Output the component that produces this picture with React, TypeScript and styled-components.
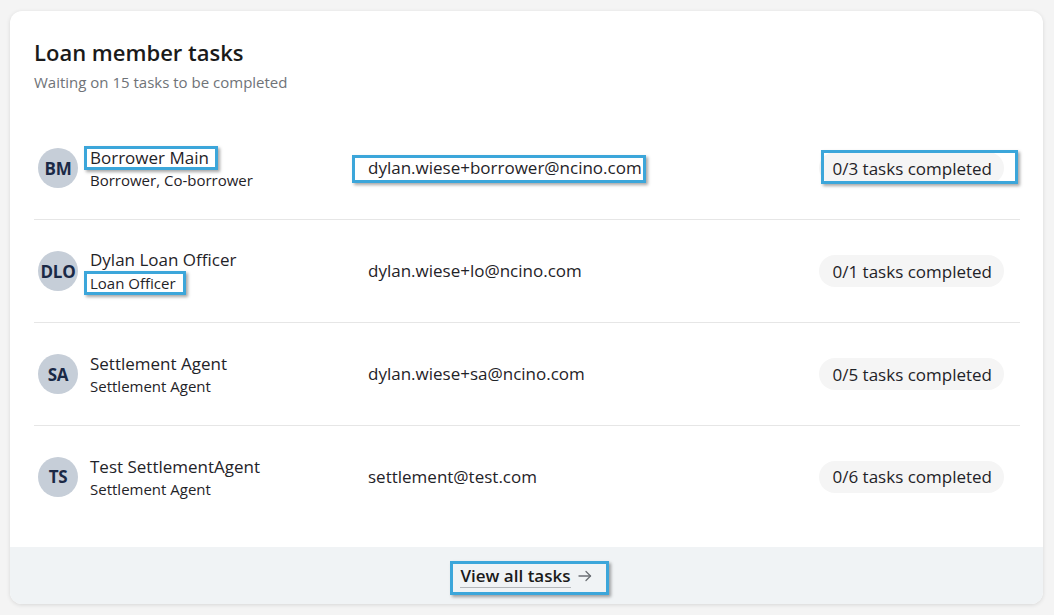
import React from 'react';
import styled, { createGlobalStyle } from 'styled-components';

const GlobalStyle = createGlobalStyle`
  html, body {
    margin: 0;
    padding: 0;
    background: #f4f4f4;
    font-family: "Open Sans", "Noto Sans", Arial, sans-serif;
    color: #1f2328;
  }
  * { box-sizing: border-box; }
`;

const Page = styled.div`
  width: 1054px;
  height: 615px;
  padding: 11px 11px 10px 10px;
`;

const Card = styled.section`
  background: #ffffff;
  border-radius: 12px;
  box-shadow: 0 1px 4px rgba(0, 0, 0, 0.12);
  display: flex;
  flex-direction: column;
`;

const Body = styled.div`
  padding: 26px 23px 20px 24px;
`;

const Title = styled.h2`
  margin: 0;
  font-size: 22px;
  line-height: 30px;
  font-weight: 600;
  color: #1a1a1a;
`;

const Subtitle = styled.p`
  margin: 5px 0 0;
  font-size: 15px;
  line-height: 20px;
  color: #6f7378;
`;

const List = styled.ul`
  list-style: none;
  margin: 25px 0 0;
  padding: 0;
`;

const Row = styled.li`
  display: grid;
  grid-template-columns: 330px 1fr auto;
  align-items: center;
  height: 103px;
  padding: 0 16px 0 4px;
  border-bottom: 1px solid #e6e6e6;

  &:last-child {
    border-bottom: none;
    height: 101px;
  }
`;

const Member = styled.div`
  display: flex;
  align-items: center;
  gap: 12px;
`;

const Avatar = styled.div`
  width: 40px;
  height: 40px;
  border-radius: 50%;
  background: #c6ced8;
  color: #1a2946;
  font-weight: 700;
  font-size: 17px;
  display: flex;
  align-items: center;
  justify-content: center;
  letter-spacing: -0.3px;
  flex-shrink: 0;
`;

const Names = styled.div`
  display: flex;
  flex-direction: column;
  align-items: flex-start;
`;

const Name = styled.span`
  font-size: 17px;
  line-height: 24px;
  color: #1f2328;
`;

const Role = styled.span`
  font-size: 15px;
  line-height: 20px;
  color: #1f2328;
`;

const Email = styled.span`
  font-size: 17px;
  line-height: 24px;
  color: #1f2328;
  justify-self: start;
`;

const Badge = styled.span`
  display: inline-flex;
  align-items: center;
  height: 32px;
  padding: 0 12px 0 13px;
  border-radius: 16px;
  background: #f5f5f5;
  font-size: 17px;
  color: #1f2328;
`;

const Footer = styled.div`
  background: #f0f3f5;
  border-radius: 0 0 12px 12px;
  height: 57px;
  display: flex;
  align-items: center;
  justify-content: center;
`;

const ViewAll = styled.a`
  display: inline-flex;
  align-items: center;
  gap: 6px;
  font-size: 17px;
  line-height: 24px;
  font-weight: 600;
  color: #1a1a1a;
  text-decoration: none;
  cursor: pointer;
  margin-top: 1px;
`;

const LinkText = styled.span`
  border-bottom: 1px solid #b3b7bb;
  line-height: 23px;
`;

type Inset = { t: number; r: number; b: number; l: number };

const Marked = styled.span<{ $inset: Inset }>`
  position: relative;
  display: inline-block;
  justify-self: start;
  align-self: center;

  &::after {
    content: '';
    position: absolute;
    top: ${(p) => p.$inset.t}px;
    right: ${(p) => p.$inset.r}px;
    bottom: ${(p) => p.$inset.b}px;
    left: ${(p) => p.$inset.l}px;
    border: 3px solid #3ca6da;
    box-shadow: 2px 2px 3px rgba(0, 0, 0, 0.35);
    pointer-events: none;
  }
`;

const NameMark = styled(Marked)`
  align-self: flex-start;
`;

const Arrow = () => (
  <svg width="16" height="16" viewBox="0 0 16 16" fill="none" stroke="#6b6f74" strokeWidth="1.3" strokeLinecap="round" strokeLinejoin="round">
    <path d="M2 8h11.5" />
    <path d="M9 3.5 13.5 8 9 12.5" />
  </svg>
);

type MemberData = {
  initials: string;
  name: string;
  role: string;
  email: string;
  done: number;
  total: number;
};

const members: MemberData[] = [
  { initials: 'BM', name: 'Borrower Main', role: 'Borrower, Co-borrower', email: 'dylan.wiese+borrower@ncino.com', done: 0, total: 3 },
  { initials: 'DLO', name: 'Dylan Loan Officer', role: 'Loan Officer', email: 'dylan.wiese+lo@ncino.com', done: 0, total: 1 },
  { initials: 'SA', name: 'Settlement Agent', role: 'Settlement Agent', email: 'dylan.wiese+sa@ncino.com', done: 0, total: 5 },
  { initials: 'TS', name: 'Test SettlementAgent', role: 'Settlement Agent', email: 'settlement@test.com', done: 0, total: 6 },
];

const App: React.FC = () => {
  return (
    <>
      <GlobalStyle />
      <Page>
        <Card>
          <Body>
            <Title>Loan member tasks</Title>
            <Subtitle>Waiting on 15 tasks to be completed</Subtitle>
            <List>
              {members.map((m, i) => {
                const nameEl = <Name>{m.name}</Name>;
                const roleEl = <Role>{m.role}</Role>;
                const email = <Email>{m.email}</Email>;
                const badge = <Badge>{m.done}/{m.total} tasks completed</Badge>;
                return (
                  <Row key={m.email}>
                    <Member>
                      <Avatar>{m.initials}</Avatar>
                      <Names>
                        {i === 0 ? (
                          <NameMark $inset={{ t: 0, r: -9, b: 0, l: -6 }}>{nameEl}</NameMark>
                        ) : (
                          nameEl
                        )}
                        {i === 1 ? (
                          <NameMark $inset={{ t: -1, r: -10, b: -1, l: -6 }}>{roleEl}</NameMark>
                        ) : (
                          roleEl
                        )}
                      </Names>
                    </Member>
                    {i === 0 ? (
                      <Marked $inset={{ t: -1, r: -4, b: -3, l: -16 }}>{email}</Marked>
                    ) : (
                      email
                    )}
                    {i === 0 ? (
                      <Marked $inset={{ t: -2, r: -14, b: 0, l: 2 }}>{badge}</Marked>
                    ) : (
                      badge
                    )}
                  </Row>
                );
              })}
            </List>
          </Body>
          <Footer>
            <Marked $inset={{ t: -2, r: -16, b: -7, l: -10 }}>
              <ViewAll>
                <LinkText>View all tasks</LinkText>
                <Arrow />
              </ViewAll>
            </Marked>
          </Footer>
        </Card>
      </Page>
    </>
  );
};

export default App;
